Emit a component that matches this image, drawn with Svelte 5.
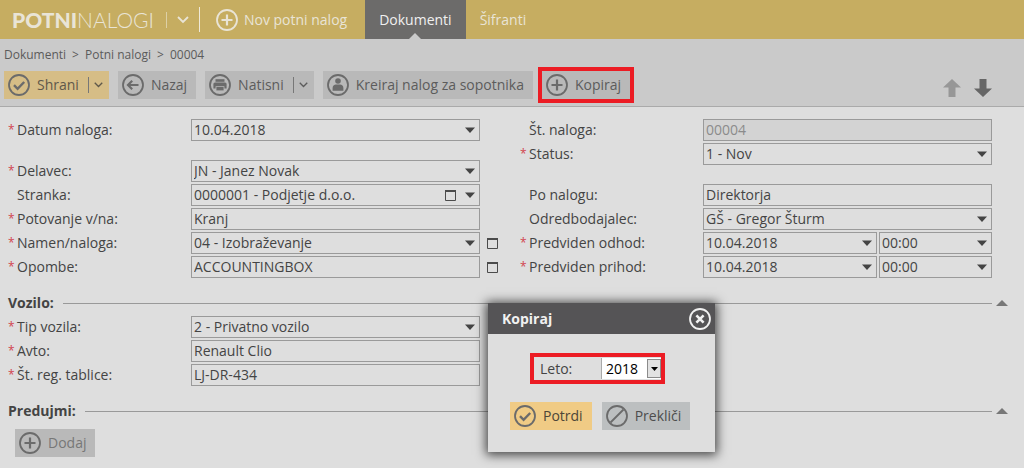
<script>
  let year = $state('2018');

  const left = [
    { id: 'datum', label: 'Datum naloga:', req: true, value: '10.04.2018', kind: 'select', gapAfter: true },
    { id: 'delavec', label: 'Delavec:', req: true, value: 'JN - Janez Novak', kind: 'select' },
    { id: 'stranka', label: 'Stranka:', value: '0000001 - Podjetje d.o.o.', kind: 'select', inner: true },
    { id: 'potovanje', label: 'Potovanje v/na:', req: true, value: 'Kranj', kind: 'text' },
    { id: 'namen', label: 'Namen/naloga:', req: true, value: '04 - Izobraževanje', kind: 'select', popup: true },
    { id: 'opombe', label: 'Opombe:', req: true, value: 'ACCOUNTINGBOX', kind: 'text', popup: true }
  ];
  const right = [
    { id: 'stevilka', label: 'Št. naloga:', value: '00004', kind: 'text', disabled: true },
    { id: 'status', label: 'Status:', req: true, value: '1 - Nov', kind: 'select', gapAfter: true },
    { id: 'ponalogu', label: 'Po nalogu:', value: 'Direktorja', kind: 'text' },
    { id: 'odredbodajalec', label: 'Odredbodajalec:', value: 'GŠ - Gregor Šturm', kind: 'select' },
    { id: 'odhod', label: 'Predviden odhod:', req: true, value: '10.04.2018', kind: 'select', time: '00:00' },
    { id: 'prihod', label: 'Predviden prihod:', req: true, value: '10.04.2018', kind: 'select', time: '00:00' }
  ];
  const vehicle = [
    { id: 'tip', label: 'Tip vozila:', req: true, value: '2 - Privatno vozilo', kind: 'select' },
    { id: 'avto', label: 'Avto:', req: true, value: 'Renault Clio', kind: 'text' },
    { id: 'tablice', label: 'Št. reg. tablice:', req: true, value: 'LJ-DR-434', kind: 'text' }
  ];
</script>

{#snippet icon(name)}
  <svg class="icon" viewBox="0 0 22 22" width="22" height="22" aria-hidden="true">
    <circle cx="11" cy="11" r="10" fill="none" stroke="currentColor" stroke-width="1.8" />
    {#if name === 'check'}
      <path d="M6 11.2l3.6 3.6 6.6-6.8" fill="none" stroke="currentColor" stroke-width="2.4" />
    {:else if name === 'back'}
      <path d="M16.5 11H7M10.2 6.8L6 11l4.2 4.2" fill="none" stroke="currentColor" stroke-width="2.2" />
    {:else if name === 'print'}
      <path d="M6.5 5.2h9v2.6h-9z" fill="currentColor" />
      <path d="M6 8.4h10a1.6 1.6 0 0 1 1.6 1.6v4.4h-2.2v-2.2H6.6v2.2H4.400V10A1.6 1.6 0 0 1 6 8.4z" fill="currentColor" />
      <path d="M7.400 13h7.200v3.400H7.400z" fill="currentColor" />
    {:else if name === 'person'}
      <circle cx="11" cy="7" r="2.8" fill="currentColor" />
      <path d="M5.6 16.8V14c0-2.200 1.500-3.500 3.400-3.500h4c1.900 0 3.400 1.300 3.400 3.500v2.800z" fill="currentColor" />
    {:else if name === 'plus'}
      <path d="M11 5.5v11M5.5 11h11" stroke="currentColor" stroke-width="2.2" />
    {:else if name === 'cancel'}
      <path d="M4.5 17.5l13-13" stroke="currentColor" stroke-width="1.8" />
    {:else if name === 'close'}
      <path d="M7.4 7.4l7.2 7.2M14.6 7.4l-7.2 7.2" stroke="currentColor" stroke-width="2.6" />
    {/if}
  </svg>
{/snippet}

{#snippet chevron(size)}
  <svg viewBox="0 0 12 8" width={size} height={size * 2 / 3} aria-hidden="true">
    <path d="M1 1l5 5 5-5" fill="none" stroke="currentColor" stroke-width="1.8" />
  </svg>
{/snippet}

{#snippet windowGlyph()}
  <svg viewBox="0 0 11 11" width="11" height="11" aria-hidden="true">
    <path d="M.5 1h10v9.5H.5z" fill="none" stroke="#4b4b4b" />
    <path d="M0 1h11" stroke="#4b4b4b" stroke-width="2" />
  </svg>
{/snippet}

{#snippet combo(id, value, label, inner)}
  <span class="combo">
    <select {id} aria-label={label}><option>{value}</option></select>
    <span class="marks">
      {#if inner}{@render windowGlyph()}{/if}
      <svg viewBox="0 0 10 6" width="10" height="6" aria-hidden="true"><path d="M0 .5h10L5 6z" fill="#444" /></svg>
    </span>
  </span>
{/snippet}

{#snippet fields(rows)}
  <div class="column">
    {#each rows as row (row.id)}
      <div class="row" class:spaced={row.gapAfter}>
        <span class="star">{row.req ? '*' : ''}</span>
        <label for={row.id}>{row.label}</label>
        <div class="control" class:double={row.time}>
          {#if row.kind === 'select'}
            {@render combo(row.id, row.value, null, row.inner)}
            {#if row.time}{@render combo(row.id + '-ura', row.time, row.label + ' ura', false)}{/if}
          {:else}
            <input id={row.id} type="text" value={row.value} disabled={row.disabled} />
          {/if}
        </div>
        {#if row.popup}
          <button class="popup" type="button" aria-label="Odpri">{@render windowGlyph()}</button>
        {/if}
      </div>
    {/each}
  </div>
{/snippet}

{#snippet heading(title)}
  <div class="heading">
    <h2>{title}</h2>
    <span class="rule"></span>
    <button type="button" aria-label="Skrči">
      <svg viewBox="0 0 12 6" width="12" height="6" aria-hidden="true"><path d="M0 6l6-6 6 6z" fill="#777" /></svg>
    </button>
  </div>
{/snippet}

<div class="page">
  <header class="top">
    <a class="logo" href="#domov"><b>POTNI</b><span>NALOGI</span></a>
    <span class="thin"></span>
    <button class="plain" type="button" aria-label="Meni">{@render chevron(12)}</button>
    <span class="thick"></span>
    <button class="plain new" type="button">{@render icon('plus')}Nov potni nalog</button>
    <nav>
      <a class="active" href="#dokumenti">Dokumenti</a>
      <a href="#sifranti">Šifranti</a>
    </nav>
  </header>

  <div class="tools">
    <div class="crumbs">
      <a href="#dokumenti">Dokumenti</a><span>&gt;</span><a href="#nalogi">Potni nalogi</a><span>&gt;</span><span>00004</span>
    </div>
    <div class="bar">
      <button class="btn gold dim split" type="button">{@render icon('check')}Shrani<i></i>{@render chevron(9)}</button>
      <button class="btn" type="button">{@render icon('back')}Nazaj</button>
      <button class="btn split" type="button">{@render icon('print')}Natisni<i></i>{@render chevron(9)}</button>
      <button class="btn" type="button">{@render icon('person')}Kreiraj nalog za sopotnika</button>
      <button class="btn marked" type="button">{@render icon('plus')}Kopiraj</button>
      <div class="arrows">
        <button class="plain" type="button" aria-label="Prejšnji">
          <svg viewBox="0 0 18 18" width="18" height="18"><path d="M9 0l9 8.5h-5.5V18h-7V8.5H0z" fill="#979797" /></svg>
        </button>
        <button class="plain" type="button" aria-label="Naslednji">
          <svg viewBox="0 0 18 18" width="18" height="18"><path d="M9 18l9-8.5h-5.5V0h-7v9.5H0z" fill="#666" /></svg>
        </button>
      </div>
    </div>
  </div>

  <main>
    <div class="columns">
      {@render fields(left)}
      {@render fields(right)}
    </div>
    {@render heading('Vozilo:')}
    <div class="columns">{@render fields(vehicle)}</div>
    {@render heading('Predujmi:')}
    <button class="btn add" type="button">{@render icon('plus')}Dodaj</button>
  </main>

  <div class="dialog" role="dialog" aria-labelledby="dialog-title">
    <div class="title">
      <h2 id="dialog-title">Kopiraj</h2>
      <button class="plain" type="button" aria-label="Zapri">{@render icon('close')}</button>
    </div>
    <div class="year">
      <label for="leto">Leto:</label>
      <span class="yearbox">
        <select id="leto" bind:value={year}><option>2018</option></select>
        <span class="drop"><svg viewBox="0 0 7 4" width="7" height="4" aria-hidden="true"><path d="M0 0h7L3.5 4z" fill="#000" /></svg></span>
      </span>
    </div>
    <div class="actions">
      <button class="btn gold" type="button">{@render icon('check')}Potrdi</button>
      <button class="btn cool" type="button">{@render icon('cancel')}Prekliči</button>
    </div>
  </div>
</div>

<style>
  :global(body) {
    margin: 0;
    background: #dedede;
  }
  .page {
    position: relative;
    min-height: 100vh;
    overflow: hidden;
    background: #dedede;
    color: #444;
    font: 14px/20px 'Trebuchet MS', 'Open Sans', sans-serif;
  }
  button, input, select {
    font: inherit;
    color: inherit;
    margin: 0;
    padding: 0;
    border: 0;
    border-radius: 0;
    background: none;
    box-sizing: border-box;
  }
  a {
    color: inherit;
    text-decoration: none;
  }
  svg {
    display: block;
    flex: none;
  }
  h2 {
    margin: 0;
    font-size: 14px;
    line-height: 20px;
  }
  .plain {
    display: flex;
    align-items: center;
  }

  .top {
    display: flex;
    align-items: center;
    height: 39px;
    padding-left: 12px;
    background: #c6ad61;
    color: #e9e4d6;
  }
  .logo {
    font: 21px/24px Lato, sans-serif;
  }
  .logo b {
    font-weight: 900;
  }
  .logo span {
    font-weight: 300;
  }
  .thin {
    width: 1px;
    height: 16px;
    margin: 0 10px 0 12px;
    background: #ddd0a6;
  }
  .thick {
    width: 1px;
    height: 25px;
    margin: 0 16px 0 10px;
    background: #efe9d8;
  }
  .new {
    gap: 6px;
    margin-right: 18px;
  }
  nav {
    display: flex;
    align-self: stretch;
  }
  nav a {
    position: relative;
    display: flex;
    align-items: center;
    padding: 0 14px;
  }
  nav .active {
    background: #6c6b6a;
    color: #f0f0f0;
  }
  nav .active::after {
    content: '';
    position: absolute;
    left: 50%;
    bottom: 0;
    margin-left: -6px;
    border: 6px solid transparent;
    border-top: 0;
    border-bottom-color: #cacaca;
  }

  .tools {
    padding: 8px 4px 7px;
    border-bottom: 1px solid #aaa;
    background: #cacaca;
    color: #5b5b5b;
  }
  .crumbs {
    display: flex;
    gap: 6px;
    font-size: 12px;
    line-height: 16px;
  }
  .bar {
    display: flex;
    align-items: center;
    gap: 9px;
    margin-top: 8px;
  }
  .btn {
    display: flex;
    align-items: center;
    gap: 7px;
    height: 28px;
    padding: 0 9px 0 4px;
    background: #b9b9b9;
    color: #5c5c5c;
    white-space: nowrap;
  }
  .btn :global(.icon) {
    color: #6b6b6b;
  }
  .btn.gold {
    background: #f0cb85;
    color: #4d4638;
  }
  .btn.gold.dim {
    background: #d6bd86;
    color: #5f584a;
  }
  .btn.cool {
    background: #bcbfc0;
    color: #4d4d4d;
  }
  .btn.split {
    padding-right: 6px;
  }
  .btn i {
    width: 1px;
    height: 16px;
    margin: 0 -2px 0 2px;
    background: #777;
  }
  .marked {
    outline: 4px solid #ec1c24;
  }
  .arrows {
    display: flex;
    gap: 13px;
    margin: 6px 28px 0 auto;
  }

  main {
    padding-top: 12px;
  }
  .columns {
    display: grid;
    grid-template-columns: 1fr 1fr;
  }
  .column {
    display: flex;
    flex-direction: column;
    gap: 2px;
    padding-left: 8px;
  }
  .row {
    display: grid;
    grid-template-columns: 9px 174px 1fr 32px;
    align-items: center;
    height: 22px;
  }
  .row.spaced {
    margin-bottom: 17px;
  }
  .star {
    color: #d2454f;
    font-size: 12px;
  }
  .control {
    display: grid;
    grid-template-columns: 1fr;
    gap: 2px;
  }
  .control.double {
    grid-template-columns: 174px 1fr;
  }
  .combo {
    position: relative;
    display: block;
  }
  .control input, .control select {
    display: block;
    width: 100%;
    height: 22px;
    padding: 0 2px;
    border: 1px solid #9a9a9a;
    appearance: none;
  }
  .control input {
    padding-bottom: 2px;
  }
  .control input:disabled {
    background: #d3d3d3;
    color: #8b8b8b;
  }
  .marks {
    position: absolute;
    top: 0;
    bottom: 0;
    right: 5px;
    display: flex;
    align-items: center;
    gap: 9px;
    pointer-events: none;
  }
  .popup {
    margin-left: 7px;
  }

  .heading {
    display: flex;
    align-items: center;
    gap: 9px;
    margin: 15px 16px 3px 8px;
  }
  .heading .rule {
    flex: 1;
    height: 1px;
    margin-right: -5px;
    background: #999;
  }
  .add {
    margin: 8px 0 0 15px;
    color: #777;
  }

  .dialog {
    position: absolute;
    top: 303px;
    left: 488px;
    width: 227px;
    box-sizing: border-box;
    padding-bottom: 22px;
    background: #dedede;
    box-shadow: 0 1px 10px 2px rgba(0, 0, 0, 0.7);
  }
  .title {
    display: flex;
    align-items: center;
    justify-content: space-between;
    height: 31px;
    padding: 0 4px 0 14px;
    background: #555456;
    color: #f1f1f1;
  }
  .year {
    display: flex;
    align-items: center;
    justify-content: space-between;
    margin: 19px 50px 0 42px;
    height: 23px;
    padding-left: 6px;
    border: 4px solid #ec1c24;
  }
  .yearbox {
    display: flex;
    align-items: center;
    width: 60px;
    height: 21px;
    position: relative;
    background: #fff;
    color: #000;
    border-left: 1px solid #aaa;
    box-sizing: border-box;
  }
  .yearbox select {
    width: 100%;
    height: 21px;
    padding-left: 4px;
    appearance: none;
  }
  .drop {
    position: absolute;
    right: 0;
    top: 1px;
    display: grid;
    place-items: center;
    width: 14px;
    height: 19px;
    box-sizing: border-box;
    border: 1px solid #8b8b8b;
    background: #e2e2e2;
    pointer-events: none;
  }
  .actions {
    display: flex;
    gap: 10px;
    margin: 18px 22px 0;
  }
</style>
